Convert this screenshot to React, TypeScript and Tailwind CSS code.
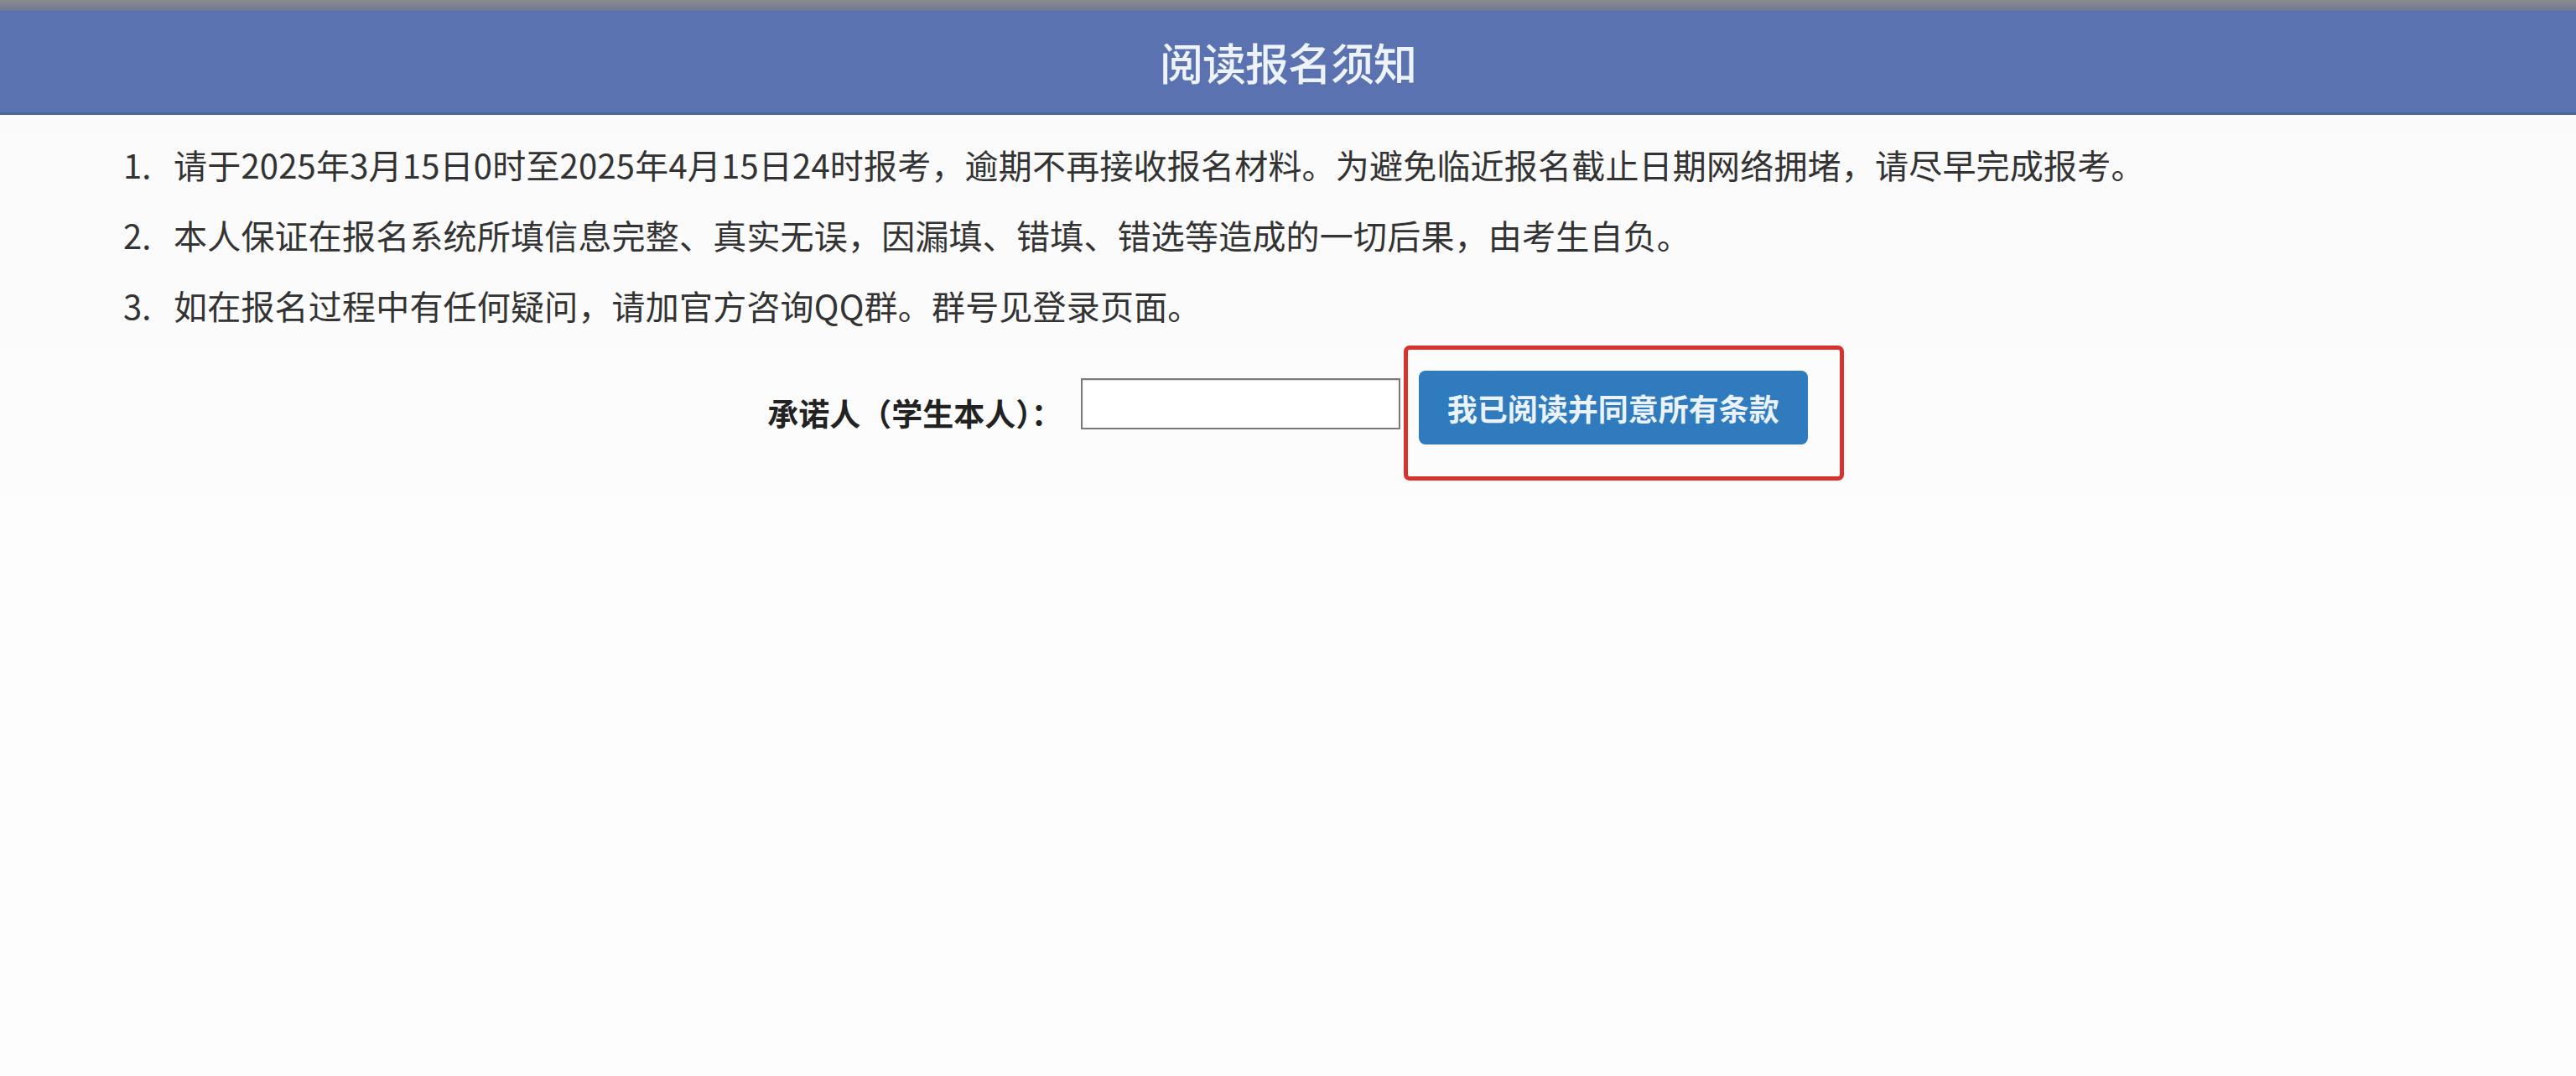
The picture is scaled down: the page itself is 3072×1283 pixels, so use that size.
import React from 'react';

const notices = [
  '请于2025年3月15日0时至2025年4月15日24时报考，逾期不再接收报名材料。为避免临近报名截止日期网络拥堵，请尽早完成报考。',
  '本人保证在报名系统所填信息完整、真实无误，因漏填、错填、错选等造成的一切后果，由考生自负。',
  '如在报名过程中有任何疑问，请加官方咨询QQ群。群号见登录页面。',
];

export default function App() {
  return (
    <div
      className="min-h-[1283px] w-full bg-[#fdfdfd] text-[#333]"
      style={{ fontFamily: '"Noto Sans CJK SC", "Noto Sans", sans-serif' }}
    >
      {/* top strip */}
      <div className="h-[13px] bg-gradient-to-b from-[#8b8b8b] to-[#6f7896]" />

      {/* header */}
      <div className="flex h-[124px] items-center justify-center border-b-[3px] border-[#4d64a0] bg-[#5a72b0]">
        <h1 className="text-[52px] font-medium leading-none tracking-[-1px] text-[#eef2fb]">阅读报名须知</h1>
      </div>

      <div className="bg-gradient-to-b from-[#fafafa] to-[#fcfcfc] pb-[20px]">
        <ol className="pl-[147px] pt-[17px]">
          {notices.map((text, i) => (
            <li key={i} className="flex text-[40px] leading-[84px]">
              <span className="w-[60px] shrink-0">{i + 1}.</span>
              <span className="tracking-[0.2px]">{text}</span>
            </li>
          ))}
        </ol>

        <div className="mt-[6px] flex items-start justify-center pl-[42px]">
          <label className="mt-[60px] text-[37px] font-bold leading-[40px] text-[#222]">承诺人（学生本人）：</label>
          <input
            type="text"
            className="ml-[22px] mt-[39px] h-[61px] w-[381px] border-2 border-[#7a7a7a] bg-white shadow-[inset_0_1px_2px_rgba(0,0,0,0.15)] outline-none"
          />
          <div className="ml-[4px] rounded-[7px] border-[5px] border-[#d8322e] pb-[38px] pl-[13px] pr-[38px] pt-[25px]">
            <button
              type="button"
              className="h-[88px] w-[464px] rounded-[8px] bg-[#2f7bbd] text-[36px] font-bold text-[#eaf2fb]"
            >
              我已阅读并同意所有条款
            </button>
          </div>
        </div>
      </div>
    </div>
  );
}
